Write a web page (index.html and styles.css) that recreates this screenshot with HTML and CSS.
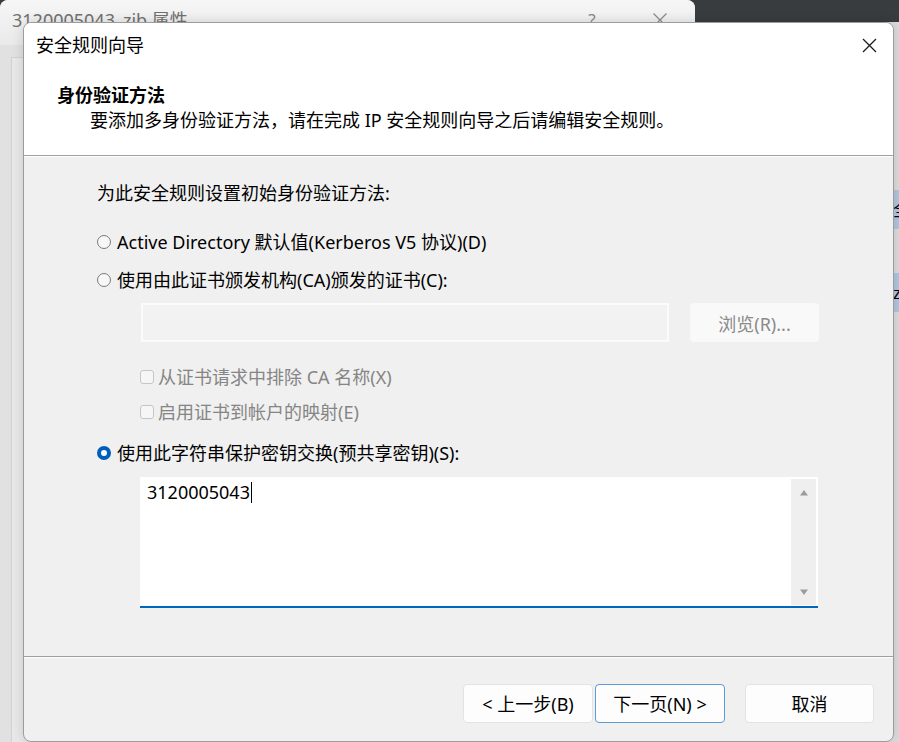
FILE: index.html
```html
<!DOCTYPE html>
<html lang="zh-CN">
<head>
<meta charset="utf-8">
<title>安全规则向导</title>
<link rel="stylesheet" href="styles.css">
</head>
<body>
<div class="desktop">
  <div class="bgwin">
    <div class="bgwin-title">
      <span class="bgwin-text">3120005043_zjb 属性</span>
      <span class="bgwin-help">?</span>
      <span class="bgwin-close"><svg width="16" height="16" viewBox="0 0 16 16"><path d="M1.5 1.5 L14.5 14.5 M14.5 1.5 L1.5 14.5" stroke="#8a8a8a" stroke-width="1.2" fill="none"/></svg></span>
    </div>
    <div class="bgwin-body"><div class="bgwin-panel"></div></div>
  </div>

  <div class="rightwin">
    <div class="rw-item">全部</div>
    <div class="rw-item">zjb</div>
  </div>

  <div class="dialog">
    <div class="titlebar">
      <span class="title-text">安全规则向导</span>
      <svg class="close-icon" width="15" height="15" viewBox="0 0 15 15"><path d="M1 1 L14 14 M14 1 L1 14" stroke="#1a1a1a" stroke-width="1.25" fill="none"/></svg>
    </div>
    <div class="header">
      <div class="header-title">身份验证方法</div>
      <div class="header-sub">要添加多身份验证方法，请在完成 IP 安全规则向导之后请编辑安全规则。</div>
    </div>
    <div class="rule"></div>
    <div class="content">
      <div class="intro">为此安全规则设置初始身份验证方法:</div>
      <div class="opt opt-1"><span class="radio"></span><span>Active Directory 默认值(Kerberos V5 协议)(D)</span></div>
      <div class="opt opt-2"><span class="radio"></span><span>使用由此证书颁发机构(CA)颁发的证书(C):</span></div>
      <div class="certrow">
        <div class="certinput"></div>
        <div class="browse">浏览(R)...</div>
      </div>
      <div class="chk chk-1"><span class="box"></span><span>从证书请求中排除 CA 名称(X)</span></div>
      <div class="chk chk-2"><span class="box"></span><span>启用证书到帐户的映射(E)</span></div>
      <div class="opt opt-3"><span class="radio radio-on"></span><span>使用此字符串保护密钥交换(预共享密钥)(S):</span></div>
      <div class="textbox">
        <div class="textarea-text">3120005043<span class="caret"></span></div>
        <div class="scrollbar">
          <div class="sb-btn"><svg width="10" height="7" viewBox="0 0 10 7"><path d="M1 6.5 L5 1 L9 6.5 Z" fill="#9c9c9c"/></svg></div>
          <div class="sb-btn"><svg width="10" height="7" viewBox="0 0 10 7"><path d="M1 0.5 L5 6 L9 0.5 Z" fill="#9c9c9c"/></svg></div>
        </div>
      </div>
    </div>
    <div class="rule"></div>
    <div class="footer">
      <div class="btn btn-back">&lt; 上一步(B)</div>
      <div class="btn btn-next">下一页(N) &gt;</div>
      <div class="btn btn-cancel">取消</div>
    </div>
  </div>
</div>
</body>
</html>
```

FILE: styles.css
```css
* { box-sizing: border-box; }

html, body {
  margin: 0;
  padding: 0;
  width: 899px;
  height: 742px;
  overflow: hidden;
  background: #393c3e;
  font-family: "Noto Sans", "Noto Sans CJK SC", sans-serif;
  font-size: 18px;
  color: #000;
}

.desktop {
  position: relative;
  width: 899px;
  height: 742px;
  overflow: hidden;
}

/* background window (behind) */
.bgwin {
  position: absolute;
  left: 0;
  top: 0;
  width: 695px;
  height: 760px;
  border-radius: 8px 8px 0 0;
  background: #e1e1e1;
  overflow: hidden;
  display: flex;
  flex-direction: column;
}

.bgwin-title {
  height: 45px;
  background: linear-gradient(#f6f6f6, #e9e9e9);
  display: flex;
  align-items: flex-start;
  padding: 8px 12px 0 12px;
  line-height: 24px;
  color: #707070;
}

.bgwin-text { flex: 1; }

.bgwin-help {
  width: 46px;
  text-align: center;
  color: #8a8a8a;
  font-size: 17px;
}

.bgwin-close {
  width: 46px;
  margin-left: 22px;
  display: flex;
  justify-content: center;
  padding-top: 4px;
}

.bgwin-body {
  flex: 1;
  padding: 12px 0 0 11px;
}

.bgwin-panel {
  height: 100%;
  background: #e8e8e8;
  border-left: 1px solid #d2d2d2;
  border-top: 1px solid #d2d2d2;
}

/* right background window */
.rightwin {
  position: absolute;
  left: 880px;
  top: 22px;
  width: 40px;
  height: 720px;
  background: #dcdcdc;
  padding-top: 168px;
}

.rw-item {
  height: 39px;
  background: #b0c6e0;
  padding-left: 13px;
  line-height: 39px;
  font-size: 17px;
  white-space: nowrap;
  overflow: hidden;
}

.rw-item + .rw-item { margin-top: 44px; }

/* main dialog */
.dialog {
  position: absolute;
  left: 23px;
  top: 22px;
  width: 871px;
  height: 720px;
  border: 1px solid #9c9c9c;
  border-radius: 8px;
  overflow: hidden;
  background: #f0f0f0;
  box-shadow: 0 0 12px rgba(0, 0, 0, 0.14);
  display: flex;
  flex-direction: column;
}

.titlebar {
  height: 44px;
  background: #fff;
  display: flex;
  align-items: center;
  justify-content: space-between;
  padding: 0 16px 0 12px;
  line-height: 24px;
}

.close-icon { display: block; }

.header {
  background: #fff;
  padding: 16px 0 23px 33px;
}

.header-title {
  font-weight: 700;
  line-height: 25px;
}

.header-sub {
  line-height: 24px;
  padding-left: 33px;
}

.rule {
  height: 2px;
  border-top: 1px solid #a0a0a0;
  border-bottom: 1px solid #fdfdfd;
  flex: none;
}

.content {
  flex: 1;
  padding: 24px 0 0 73px;
}

.intro { line-height: 24px; }

.opt {
  display: flex;
  align-items: center;
  line-height: 24px;
}

.opt-1 { margin-top: 25px; }
.opt-2 { margin-top: 14px; }
.opt-3 { margin-top: 17px; }

.radio {
  width: 14px;
  height: 14px;
  border-radius: 50%;
  border: 1px solid #7a7a7a;
  background: #f7f7f7;
  margin-right: 6px;
  flex: none;
}

.radio-on {
  border: 4px solid #005fb8;
  background: #fff;
}

.certrow {
  display: flex;
  gap: 21px;
  margin: 11px 0 0 44px;
}

.certinput {
  width: 528px;
  height: 39px;
  border: 2px solid #fbfbfb;
  background: #f2f2f2;
}

.browse {
  width: 129px;
  height: 39px;
  border-radius: 4px;
  background: #f9f9f9;
  color: #8a8a8a;
  display: flex;
  align-items: center;
  justify-content: center;
}

.chk {
  display: flex;
  align-items: center;
  line-height: 24px;
  margin-left: 43px;
  color: #858585;
}

.chk-1 { margin-top: 23px; }
.chk-2 { margin-top: 11px; }

.box {
  width: 14px;
  height: 14px;
  border: 1px solid #c6c6c6;
  border-radius: 3px;
  background: #f6f6f6;
  margin-right: 4px;
  flex: none;
}

.textbox {
  margin: 12px 0 0 43px;
  width: 678px;
  height: 131px;
  background: #fff;
  border-bottom: 2px solid #0067c0;
  display: flex;
}

.textarea-text {
  flex: 1;
  padding: 3px 0 0 7px;
  line-height: 24px;
}

.caret {
  display: inline-block;
  width: 1px;
  height: 21px;
  background: #000;
  vertical-align: -4px;
  margin-left: 1px;
}

.scrollbar {
  width: 25px;
  margin: 2px 2px 1px 0;
  background: #efefef;
  display: flex;
  flex-direction: column;
  justify-content: space-between;
}

.sb-btn {
  height: 26px;
  display: flex;
  align-items: center;
  justify-content: center;
}

.sb-btn svg { display: block; }

.footer {
  height: 83px;
  flex: none;
  display: flex;
  justify-content: flex-end;
  align-items: flex-start;
  padding: 26px 19px 0 0;
}

.btn {
  height: 39px;
  width: 130px;
  background: #fdfdfd;
  border: 1px solid #e3e3e3;
  border-radius: 4px;
  display: flex;
  align-items: center;
  justify-content: center;
  line-height: 24px;
}

.btn-next {
  margin-left: 2px;
  border-color: #5a9bd8;
}

.btn-cancel {
  width: 129px;
  margin-left: 20px;
}
```
